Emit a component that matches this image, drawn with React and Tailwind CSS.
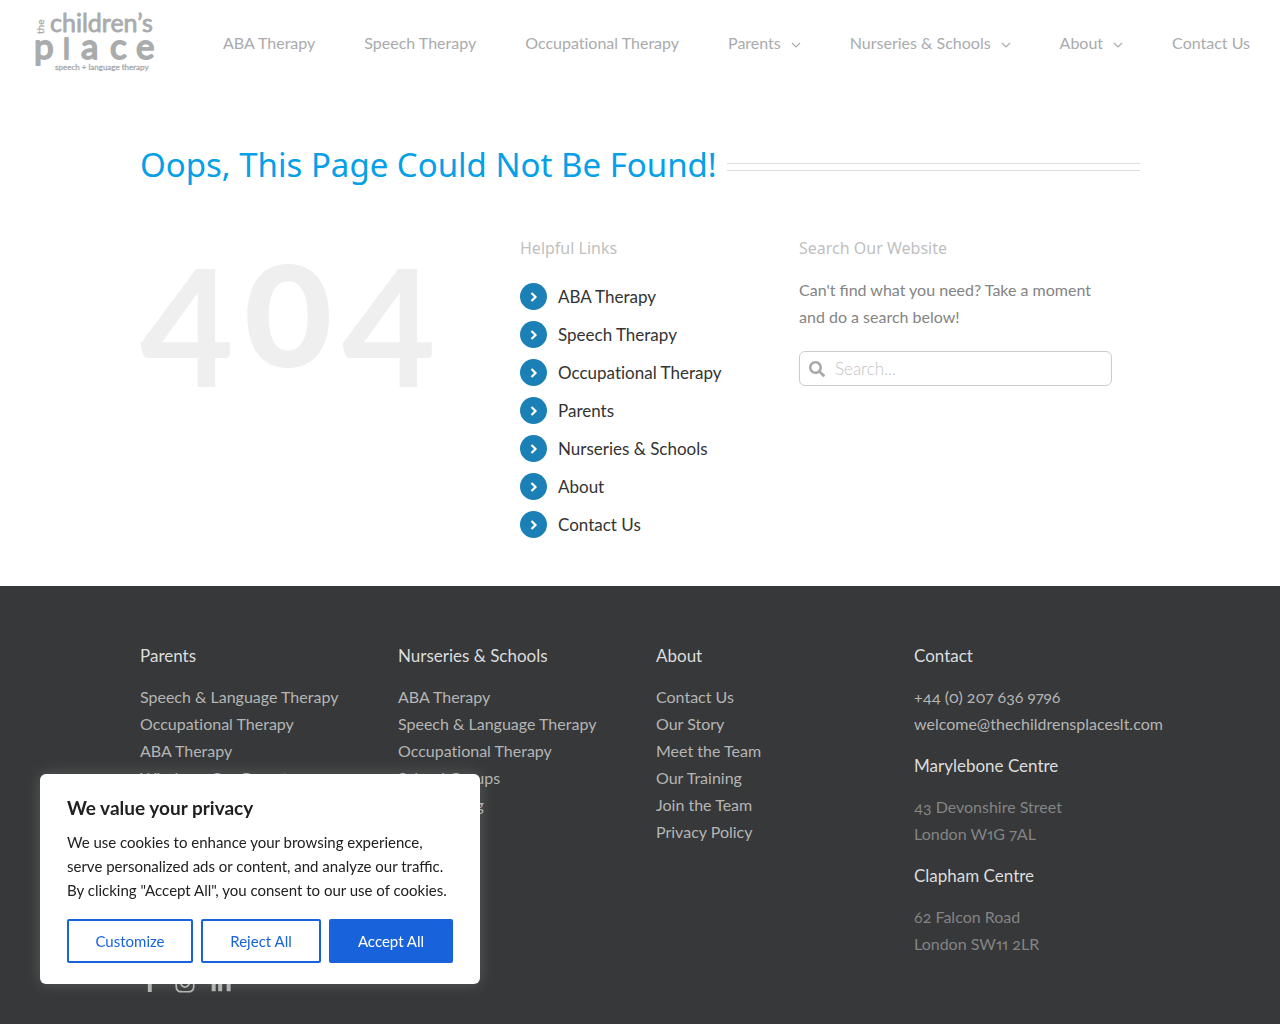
import { FaSearch, FaFacebookF, FaInstagram, FaLinkedinIn } from "react-icons/fa";

const NAV = [
  ["ABA Therapy"],
  ["Speech Therapy"],
  ["Occupational Therapy"],
  ["Parents", true],
  ["Nurseries & Schools", true],
  ["About", true],
  ["Contact Us"],
];

const HELPFUL = NAV.map(([label]) => label);

const FOOTER = [
  ["Parents", ["Speech & Language Therapy", "Occupational Therapy", "ABA Therapy", "Windows Our Parents"]],
  ["Nurseries & Schools", ["ABA Therapy", "Speech & Language Therapy", "Occupational Therapy", "School Groups", "Our Training"]],
  ["About", ["Contact Us", "Our Story", "Meet the Team", "Our Training", "Join the Team", "Privacy Policy"]],
];

function Chevron({ className }) {
  return (
    <svg viewBox="0 0 10 6" fill="none" stroke="currentColor" strokeWidth="1.2" className={className} aria-hidden="true">
      <path d="M1 1l4 4 4-4" />
    </svg>
  );
}

function Logo() {
  return (
    <svg viewBox="0 0 120 62" className="h-[62px] w-[120px] overflow-visible" fill="#a9abad" stroke="#a9abad" strokeLinejoin="round" role="img" aria-label="The Children's Place" fontFamily="Lato, sans-serif">
      <text transform="translate(9 22) rotate(-90)" fontSize="10" strokeWidth="0.3">the</text>
      <text x="15" y="20" fontSize="25" strokeWidth="0.8">children’s</text>
      <g fontSize="35" strokeWidth="1.8">
        <text x="-1" y="47">p</text>
        <text x="28" y="47" fontSize="29">l</text>
        <text x="46" y="47">a</text>
        <text x="75" y="47">c</text>
        <text x="101" y="47">e</text>
      </g>
      <text x="20" y="58" fontSize="8" strokeWidth="0.3">speech + language therapy</text>
    </svg>
  );
}

function FooterHeading({ children }) {
  return <h4 className="text-[17px] leading-6 text-[#dddddd]">{children}</h4>;
}

export default function App() {
  return (
    <div className="min-h-screen bg-[#363839] font-['Lato','Open_Sans',sans-serif] text-base [font-variant-ligatures:no-common-ligatures]">
      <div className="bg-white pb-12">
        <header className="flex h-[86px] items-center justify-between pl-[35px] pr-[30px]">
          <a href="#home"><Logo /></a>
          <nav className="flex gap-[49px]">
            {NAV.map(([label, menu]) => (
              <a key={label} href="#nav" className="flex items-center gap-[10px] whitespace-nowrap text-[#a9abad]">
                {label}
                {menu && <Chevron className="mt-1 h-[6px] w-[10px]" />}
              </a>
            ))}
          </nav>
        </header>

        <main className="mx-auto max-w-[1000px] pt-[56px]">
          <div className="flex items-center gap-[10px]">
            <h1 className="whitespace-nowrap font-['Noto_Sans',sans-serif] text-[33px] leading-[46px] text-[#05a0e8]">Oops, This Page Could Not Be Found!</h1>
            <div className="mt-1 h-2 flex-1 border-y border-[#dddddd]" />
          </div>

          <div className="flex pt-12">
            <div className="flex w-[380px] items-start font-bold text-[#efefef]" aria-label="404">
              <span className="w-[101px] pt-[14px] text-[162px] leading-[150px]">4</span>
              <span className="w-[101px] font-['Inter',sans-serif] text-[140px] leading-[160px]">0</span>
              <span className="w-[101px] pt-[14px] text-[162px] leading-[150px]">4</span>
            </div>
            <div className="w-[279px]">
              <h2 className="font-['Noto_Sans',sans-serif] text-base leading-6 text-[#bfbfbf]">Helpful Links</h2>
              <ul className="flex flex-col gap-[11px] pt-[23px]">
                {HELPFUL.map((label) => (
                  <li key={label} className="flex items-center gap-[11px]">
                    <span className="flex size-[27px] items-center justify-center rounded-full bg-[#1a80b6] text-white">
                      <svg viewBox="0 0 8 10" className="h-[10px] w-2" fill="none" stroke="currentColor" strokeWidth="2.2" aria-hidden="true">
                        <path d="M1.5 1l4 4-4 4" />
                      </svg>
                    </span>
                    <a href="#link" className="text-[17px] leading-[27px] text-[#333333]">{label}</a>
                  </li>
                ))}
              </ul>
            </div>
            <div className="w-[313px]">
              <h2 className="font-['Noto_Sans',sans-serif] text-base leading-6 text-[#bfbfbf]">Search Our Website</h2>
              <p className="pt-4 leading-[27px] text-[#848484] [font-variant-ligatures:normal]">Can't find what you need? Take a moment and do a search below!</p>
              <form className="mt-[21px] flex h-[35px] items-center gap-[10px] rounded-md border border-[#cccccc] px-[9px]">
                <button type="button" aria-label="Search" className="text-[#aaa9a9]"><FaSearch className="size-4" /></button>
                <input type="text" aria-label="Search our website" placeholder="Search..." className="min-w-0 flex-1 text-[17px] font-light outline-none placeholder:text-[#c4c4c4]" />
              </form>
            </div>
          </div>
        </main>
      </div>

      <footer className="mx-auto max-w-[1000px] pt-[58px] text-[#b5b5b5]">
        <div className="grid grid-cols-[258px_258px_258px_226px]">
          {FOOTER.map(([title, links]) => (
            <section key={title}>
              <FooterHeading>{title}</FooterHeading>
              <ul className="pt-[15px] leading-[27px]">
                {links.map((l) => (
                  <li key={l}><a href="#footer">{l}</a></li>
                ))}
              </ul>
            </section>
          ))}
          <section className="leading-[27px] oldstyle-nums proportional-nums">
            <FooterHeading>Contact</FooterHeading>
            <div className="flex flex-col pb-[17px] pt-[15px]">
              <a href="tel:+442076369796">+44 (0) 207 636 9796</a>
              <a href="mailto:welcome@thechildrensplaceslt.com">welcome@thechildrensplaceslt.com</a>
            </div>
            <FooterHeading>Marylebone Centre</FooterHeading>
            <address className="pb-[17px] pt-[15px] not-italic text-[#848484]">43 Devonshire Street<br />London W1G 7AL</address>
            <FooterHeading>Clapham Centre</FooterHeading>
            <address className="pt-[15px] not-italic text-[#848484]">62 Falcon Road<br />London SW11 2LR</address>
          </section>
        </div>
        <div className="flex gap-[14px] pb-8 pt-[15px]">
          <a href="#facebook" aria-label="Facebook"><FaFacebookF className="size-5" /></a>
          <a href="#instagram" aria-label="Instagram"><FaInstagram className="size-[22px]" /></a>
          <a href="#linkedin" aria-label="LinkedIn"><FaLinkedinIn className="size-[22px]" /></a>
        </div>
      </footer>

      <div role="dialog" aria-label="Cookie consent" className="fixed bottom-10 left-10 w-[440px] rounded-md bg-white px-[27px] pb-[21px] pt-[22px] text-[#212121] shadow-[0_0_15px_rgba(172,171,171,0.3)]">
        <h2 className="text-[19px] font-bold leading-6">We value your privacy</h2>
        <p className="pb-px pt-[10px] text-[15px] leading-6 [font-variant-ligatures:normal]">We use cookies to enhance your browsing experience, serve personalized ads or content, and analyze our traffic. By clicking "Accept All", you consent to our use of cookies.</p>
        <div className="mt-4 flex gap-2 text-[15px]">
          <button className="h-11 w-[126px] rounded-xs border-2 border-[#1863dc] text-[#1863dc]">Customize</button>
          <button className="h-11 w-[120px] rounded-xs border-2 border-[#1863dc] text-[#1863dc]">Reject All</button>
          <button className="h-11 flex-1 rounded-xs bg-[#1863dc] text-white">Accept All</button>
        </div>
      </div>
    </div>
  );
}
